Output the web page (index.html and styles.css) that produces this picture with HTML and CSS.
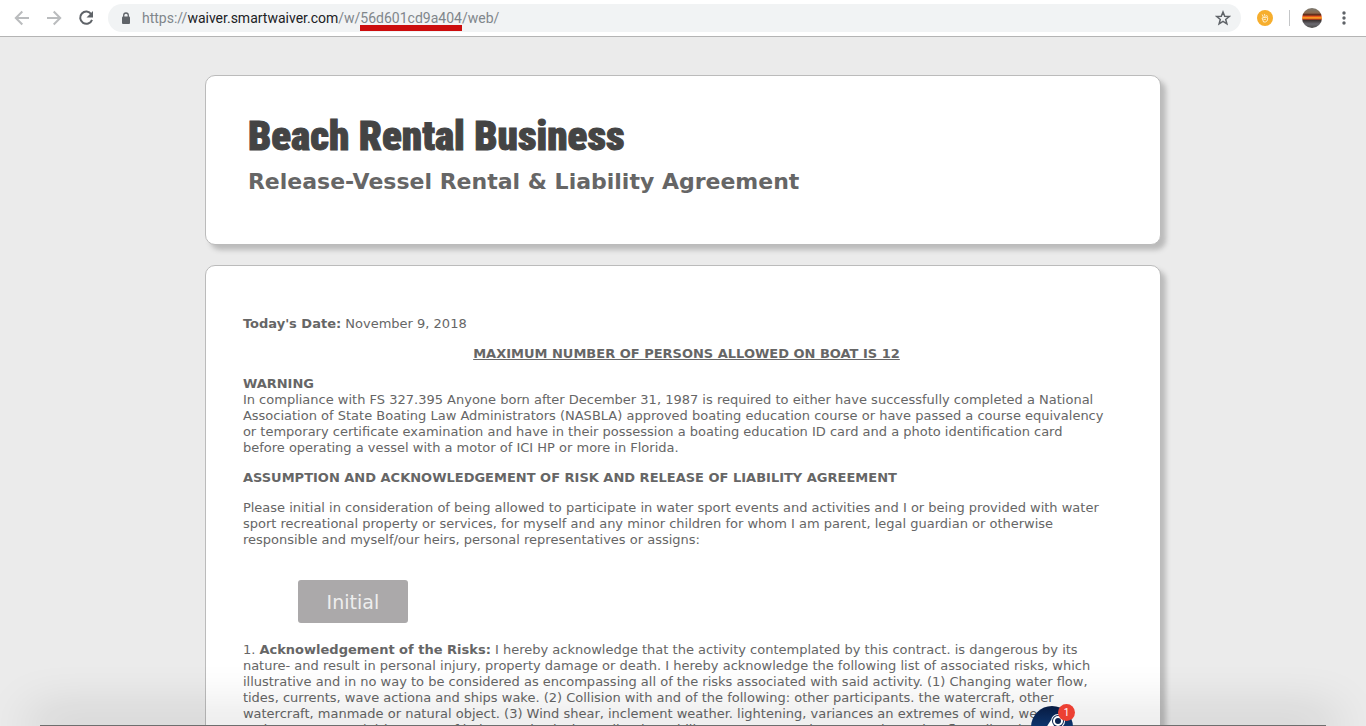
FILE: index.html
```
<!DOCTYPE html>
<html lang="en">
<head>
    <meta charset="UTF-8">
    <meta name="viewport" content="width=device-width, initial-scale=1.0">
    <title>Beach Rental Business</title>
    <link rel="stylesheet" href="styles.css">
</head>
<body>
    <header class="toolbar">
        <nav class="nav-buttons">
            <button type="button" class="icon-btn muted" aria-label="Back">
                <svg width="16" height="16" viewBox="0 0 16 16" fill="none" stroke="currentColor" stroke-width="2">
                    <path d="M15 8H2M8.300 1.500 1.800 8l6.500 6.500"/>
                </svg>
            </button>
            <button type="button" class="icon-btn muted" aria-label="Forward">
                <svg width="16" height="16" viewBox="0 0 16 16" fill="none" stroke="currentColor" stroke-width="2">
                    <path d="M1 8h13M7.700 1.500 14.200 8l-6.500 6.500"/>
                </svg>
            </button>
            <button type="button" class="icon-btn" aria-label="Reload">
                <svg width="16" height="16" viewBox="0 0 16 16">
                    <path d="M13.300 4.200A6.100 6.100 0 1 0 14 9.800" fill="none" stroke="currentColor" stroke-width="2"/>
                    <path d="M15 1v6.500H8.500z" fill="currentColor"/>
                </svg>
            </button>
        </nav>
        <div class="address-bar">
            <svg class="lock" width="10" height="13" viewBox="0 0 10 13">
                <rect x="1" y="4.500" width="8" height="7.500" rx="1" fill="#5f6368"/>
                <path d="M2.700 5V3.300a2.300 2.300 0 0 1 4.600 0V5" fill="none" stroke="#5f6368" stroke-width="1.300"/>
            </svg>
            <div class="url">https://<span class="host">waiver.smartwaiver.com</span>/w/<span class="waiver-id">56d601cd9a404</span>/web/</div>
            <button type="button" class="icon-btn star" aria-label="Bookmark this page">
                <svg width="16" height="16" viewBox="0 0 16 16" fill="none" stroke="currentColor" stroke-width="1.500">
                    <path d="M8 2l1.700 4.200 4.500.3-3.500 2.900 1.200 4.400L8 11.400l-3.900 2.400 1.200-4.400L1.800 6.500l4.500-.3z"/>
                </svg>
            </button>
        </div>
        <div class="extensions">
            <button type="button" class="icon-btn" aria-label="Extension">
                <svg width="16" height="16" viewBox="0 0 16 16">
                    <circle cx="8" cy="8" r="8" fill="#f6ae2d"/>
                    <path d="M5.200 4.500l1.300 3M7.500 4l.6 3M5 8l4-.8 1.800.6-.6 3-1.800 1.200H6.600zM6.500 9.500l2.500-.3M9.500 5l1 2" fill="none" stroke="#fff3d6" stroke-width=".9"/>
                </svg>
            </button>
            <span class="divider"></span>
            <button type="button" class="avatar" aria-label="Profile"></button>
            <button type="button" class="icon-btn menu" aria-label="Menu">
                <svg width="4" height="16" viewBox="0 0 4 16" fill="currentColor">
                    <circle cx="2" cy="3" r="1.700"/>
                    <circle cx="2" cy="8" r="1.700"/>
                    <circle cx="2" cy="13" r="1.700"/>
                </svg>
            </button>
        </div>
    </header>

    <main class="page">
        <section class="card title-card">
            <h1>Beach Rental Business</h1>
            <h2>Release-Vessel Rental &amp; Liability Agreement</h2>
        </section>

        <section class="card waiver">
            <p><strong>Today's Date:</strong> November 9, 2018</p>
            <p class="notice">MAXIMUM NUMBER OF PERSONS ALLOWED ON BOAT IS 12</p>
            <p><strong>WARNING</strong><br>
                In compliance with FS 327.395 Anyone born after December 31, 1987 is required to either have successfully completed a National<br>
                Association of State Boating Law Administrators (NASBLA) approved boating education course or have passed a course equivalency<br>
                or temporary certificate examination and have in their possession a boating education ID card and a photo identification card<br>
                before operating a vessel with a motor of ICI HP or more in Florida.</p>
            <p><strong>ASSUMPTION AND ACKNOWLEDGEMENT OF RISK AND RELEASE OF LIABILITY AGREEMENT</strong></p>
            <p>Please initial in consideration of being allowed to participate in water sport events and activities and I or being provided with water<br>
                sport recreational property or services, for myself and any minor children for whom I am parent, legal guardian or otherwise<br>
                responsible and myself/our heirs, personal representatives or assigns:</p>
            <button type="button" class="initial-btn">Initial</button>
            <p>1. <strong>Acknowledgement of the Risks:</strong> I hereby acknowledge that the activity contemplated by this contract. is dangerous by its<br>
                nature- and result in personal injury, property damage or death. I hereby acknowledge the following list of associated risks, which<br>
                illustrative and in no way to be considered as encompassing all of the risks associated with said activity. (1) Changing water flow,<br>
                tides, currents, wave actiona and ships wake. (2) Collision with and of the following: other participants. the watercraft, other<br>
                watercraft, manmade or natural object. (3) Wind shear, inclement weather. lightening, variances an extremes of wind, weather<br>
                and temperature. (4) by sense of balance, physical coordination, ability to operate equipment, swim and/or float directions. (5)</p>
        </section>
    </main>

    <div class="dock-shadow"></div>
    <div class="dock-app">
        <svg width="42" height="42" viewBox="0 0 42 42">
            <defs>
                <linearGradient id="app-blue" x1="0" y1="0" x2="0" y2="1">
                    <stop offset="0" stop-color="#071b42"/>
                    <stop offset="1" stop-color="#14509a"/>
                </linearGradient>
            </defs>
            <circle cx="21" cy="21" r="21" fill="url(#app-blue)"/>
            <circle cx="27" cy="15" r="7" fill="#ffffff"/>
            <path d="M20 14l-7 11 9 4 9-7z" fill="#ffffff"/>
            <circle cx="27" cy="15" r="6" fill="#0b2350"/>
            <circle cx="27" cy="15" r="4" fill="none" stroke="#ffffff" stroke-width="2"/>
        </svg>
        <span class="badge">1</span>
    </div>
</body>
</html>
```
FILE: styles.css
```
* {
    box-sizing: border-box;
}
body {
    margin: 0;
    height: 100vh;
    overflow: hidden;
    background-color: #ebebeb;
    color: #666666;
    font-family: Verdana, "DejaVu Sans", sans-serif;
    font-size: 13px;
    line-height: 16px;
}
button {
    border: none;
    padding: 0;
    background: none;
    font-family: inherit;
    cursor: pointer;
}

/* Browser toolbar */
.toolbar {
    display: flex;
    align-items: center;
    height: 37px;
    padding: 0 20px 0 14px;
    background-color: #ffffff;
    border-bottom: 1px solid #b4b4b4;
}
.nav-buttons {
    display: flex;
    gap: 16px;
}
.icon-btn {
    display: flex;
    color: #5f6368;
}
.icon-btn.muted {
    color: #babcbe;
}
.address-bar {
    flex: 1;
    display: flex;
    align-items: center;
    height: 28px;
    margin-left: 14px;
    padding: 0 10px 0 13px;
    border-radius: 14px;
    background-color: #f1f3f4;
}
.url {
    flex: 1;
    margin-left: 11px;
    color: #80868b;
    font-family: Roboto, sans-serif;
    font-size: 14px;
}
.host {
    color: #202124;
}
.waiver-id {
    position: relative;
}
.waiver-id::after {
    content: "";
    position: absolute;
    left: 0;
    right: 0;
    top: 15px;
    height: 6px;
    background-color: #cc0d0d;
}
.extensions {
    display: flex;
    align-items: center;
    margin-left: 16px;
}
.divider {
    width: 1px;
    height: 16px;
    margin: 0 12px 0 16px;
    background-color: #c4c6c8;
}
.avatar {
    width: 20px;
    height: 20px;
    border-radius: 50%;
    background: linear-gradient(#7b7a72 0, #8a6a50 25%, #5a2415 34%, #e8501c 42%, #ffb428 50%, #c23c14 56%, #3c3434 62%, #6b6a70 80%, #4e4c4a 100%);
}
.menu {
    margin-left: 20px;
}

/* Waiver page */
.page {
    width: 70%;
    margin: 0 auto;
    padding-top: 38px;
}
.card {
    margin-bottom: 20px;
    border: 1px solid #bbbbbb;
    border-radius: 10px;
    background-color: #ffffff;
    box-shadow: 5px 5px 5px #bbbbbb;
}
.title-card {
    padding: 36px 42px 48px;
}
h1 {
    margin: 0;
    color: #444444;
    font-family: Impact, "Roboto Condensed", "DejaVu Sans Condensed", sans-serif;
    font-size: 41px;
    font-weight: 900;
    line-height: 48px;
    -webkit-text-stroke: 1px #444444;
}
h2 {
    margin: 8px 0 0;
    font-size: 22px;
    line-height: 28px;
}
.waiver {
    padding: 50px 30px 40px 37px;
}
.waiver p {
    margin: 0 0 14px;
    white-space: nowrap;
}
.waiver .notice {
    font-weight: bold;
    text-align: center;
    text-decoration: underline;
}
.initial-btn {
    display: block;
    width: 110px;
    height: 43px;
    margin: 32px 0 19px 55px;
    border-radius: 3px;
    background-color: #aba9aa;
    color: #eeeeee;
    font-size: 19px;
}

/* Dock peeking in from the bottom edge */
.dock-shadow {
    position: fixed;
    left: 40px;
    right: 40px;
    bottom: 0;
    height: 1px;
    background-color: #6e6e6e;
    box-shadow: 0 0 50px 10px rgba(0, 0, 0, 0.2);
}
.dock-app {
    position: fixed;
    left: 1031px;
    bottom: -22px;
}
.dock-app svg {
    display: block;
}
.badge {
    position: absolute;
    top: -2px;
    right: -2px;
    width: 17px;
    height: 17px;
    border-radius: 50%;
    background-color: #ec4033;
    color: #ffffff;
    font-family: Roboto, sans-serif;
    font-size: 10px;
    line-height: 17px;
    text-align: center;
}
```
